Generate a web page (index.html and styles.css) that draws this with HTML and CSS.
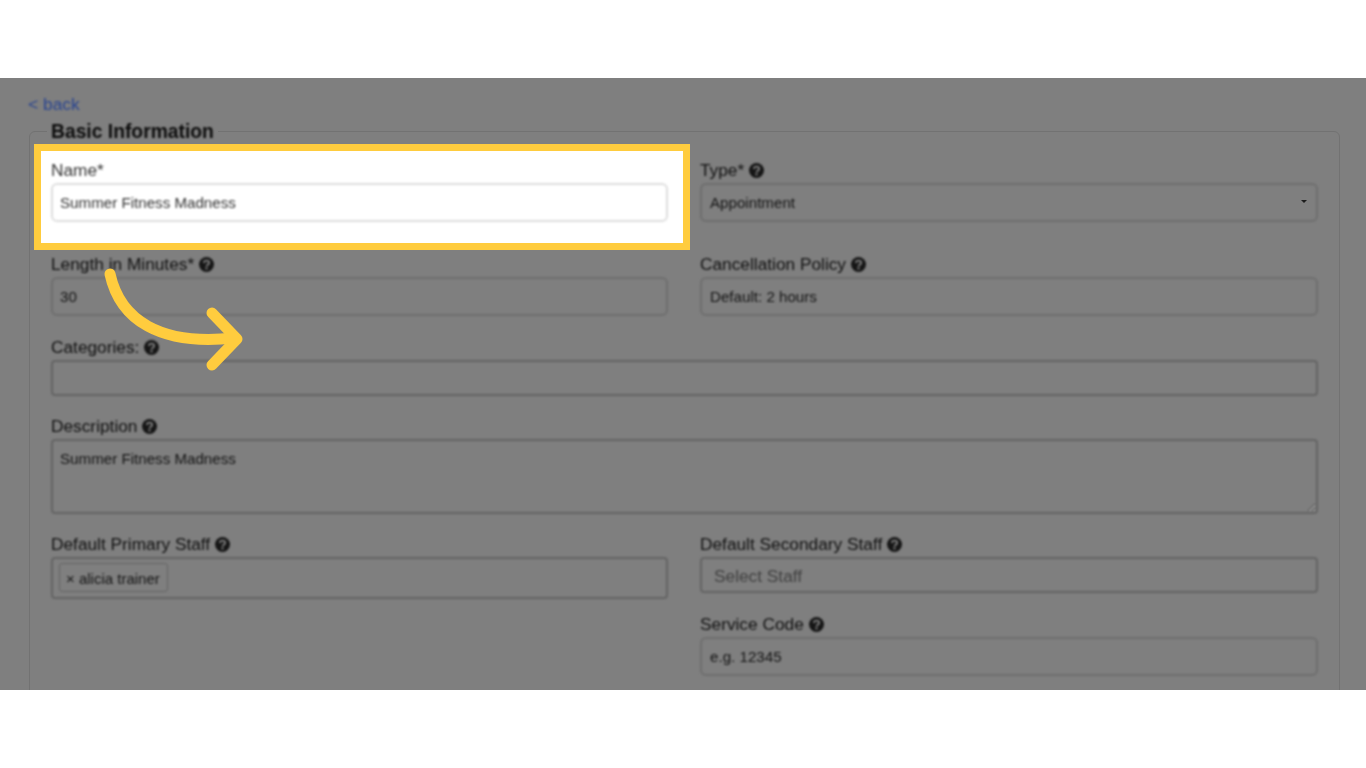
FILE: index.html
```html
<!DOCTYPE html>
<html lang="en">
<head>
    <meta charset="UTF-8">
    <meta name="viewport" content="width=device-width, initial-scale=1.0">
    <title>Edit Service</title>
    <link rel="stylesheet" href="styles.css">
</head>
<body>
    <svg class="icon-defs" width="0" height="0">
        <symbol id="help" viewBox="0 0 16 16">
            <circle cx="8" cy="8" r="8" fill="#161616"/>
            <path d="M5.2 6.2C5.4 4.6 6.6 3.8 8 3.8c1.6 0 2.8 1 2.8 2.3 0 2-2.8 2.1-2.8 3.9" fill="none" stroke="#7f7f7f" stroke-width="2"/>
            <rect x="6.9" y="11" width="2.2" height="2.2" fill="#7f7f7f"/>
        </symbol>
    </svg>
    <div class="stage">
        <a class="back-link" href="#">&lt; back</a>
        <fieldset class="panel">
            <legend>Basic Information</legend>
            <div class="form-row">
                <div class="field field-highlight">
                    <label class="field-label">Name*</label>
                    <input class="control" type="text" value="Summer Fitness Madness">
                </div>
                <div class="field field-right">
                    <label class="field-label">Type* <svg class="help"><use href="#help"/></svg></label>
                    <div class="select-wrap">
                        <select class="control">
                            <option>Appointment</option>
                        </select>
                        <span class="caret"></span>
                    </div>
                </div>
            </div>
            <div class="form-row row-tight">
                <div class="field">
                    <label class="field-label">Length in Minutes* <svg class="help"><use href="#help"/></svg></label>
                    <input class="control" type="text" value="30">
                </div>
                <div class="field field-right">
                    <label class="field-label">Cancellation Policy <svg class="help"><use href="#help"/></svg></label>
                    <input class="control" type="text" value="Default: 2 hours">
                </div>
            </div>
            <div class="field field-wide">
                <label class="field-label">Categories: <svg class="help"><use href="#help"/></svg></label>
                <input class="control control-square categories-input" type="text">
            </div>
            <div class="field field-wide">
                <label class="field-label">Description <svg class="help"><use href="#help"/></svg></label>
                <textarea class="control control-square description-input">Summer Fitness Madness</textarea>
            </div>
            <div class="form-row">
                <div class="field">
                    <label class="field-label">Default Primary Staff <svg class="help"><use href="#help"/></svg></label>
                    <div class="tag-box">
                        <span class="tag">× alicia trainer</span>
                    </div>
                </div>
                <div class="field field-right">
                    <label class="field-label">Default Secondary Staff <svg class="help"><use href="#help"/></svg></label>
                    <div class="staff-select">Select Staff</div>
                    <label class="field-label service-label">Service Code <svg class="help"><use href="#help"/></svg></label>
                    <input class="control" type="text" value="e.g. 12345">
                </div>
            </div>
        </fieldset>
        <svg class="arrow" width="150" height="110" viewBox="0 0 150 110">
            <path d="M10 8C20 54 60 80 134 72" fill="none" stroke="#ffcc3e" stroke-width="11" stroke-linecap="round"/>
            <path d="M112 47L137 73L112 99" fill="none" stroke="#ffcc3e" stroke-width="11" stroke-linecap="round" stroke-linejoin="round"/>
        </svg>
    </div>
</body>
</html>
```

FILE: styles.css
```css
* {
    box-sizing: border-box;
}
body {
    font-family: "Liberation Sans", Arial, sans-serif;
    background-color: #fff;
    margin: 0;
    padding: 78px 0;
    height: 768px;
    overflow: hidden;
}
.icon-defs {
    display: block;
    position: absolute;
}
.stage {
    position: relative;
    height: 612px;
    overflow: hidden;
    background-color: #7f7f7f;
    padding: 15px 26px 0 28px;
}
.back-link {
    display: block;
    height: 22px;
    font-size: 17.4px;
    line-height: 22px;
    color: #2a4590;
    text-decoration: none;
    filter: blur(0.8px);
}
.panel {
    margin: 4px 0 0 1px;
    padding: 17px 21px 40px;
    min-width: 0;
    border: 1px solid #727272;
    border-radius: 6px;
}
.panel legend {
    margin-left: -4px;
    padding: 2px 4px 0;
    font-size: 19.3px;
    line-height: 22px;
    font-weight: bold;
    color: #0c0c0c;
    filter: blur(0.8px);
}
.form-row {
    display: grid;
    grid-template-columns: 617px 618px;
    column-gap: 32px;
}
.field {
    margin-bottom: 32px;
}
.row-tight .field {
    margin-bottom: 21px;
}
.field-wide {
    margin-bottom: 20px;
}
.field-label {
    display: flex;
    align-items: center;
    gap: 5px;
    height: 20px;
    margin-bottom: 3px;
    font-size: 17.3px;
    line-height: 20px;
    color: #101010;
    filter: blur(0.8px);
}
.help {
    width: 15px;
    height: 15px;
}
.control {
    display: block;
    width: 100%;
    height: 39px;
    padding: 0 7px;
    font-family: inherit;
    font-size: 15.15px;
    color: #141414;
    background: transparent;
    border: 2px solid #6e6e6e;
    border-radius: 6px;
    outline: none;
    filter: blur(0.8px);
}
.field-right .control {
    padding-left: 8px;
}
select.control {
    appearance: none;
}
.select-wrap {
    position: relative;
}
.caret {
    position: absolute;
    right: 11px;
    top: 17px;
    border-left: 3px solid transparent;
    border-right: 3px solid transparent;
    border-top: 3px solid #1c1c1c;
}
.control-square {
    border-radius: 4px;
    border-color: #646464;
}
.categories-input {
    height: 36px;
}
.description-input {
    height: 75px;
    padding-top: 9px;
    line-height: 17px;
    resize: vertical;
}
.tag-box {
    height: 42px;
    padding: 4px 6px;
    border: 2px solid #646464;
    border-radius: 4px;
    filter: blur(0.8px);
}
.tag {
    display: inline-block;
    height: 29px;
    padding: 0 7px 0 6px;
    font-size: 15px;
    line-height: 29px;
    color: #141414;
    border: 1px solid #646464;
    border-radius: 3px;
}
.staff-select {
    height: 36px;
    padding-left: 12px;
    font-size: 17.3px;
    line-height: 34px;
    color: #404040;
    border: 2px solid #646464;
    border-radius: 4px;
    filter: blur(0.8px);
}
.service-label {
    margin-top: 21px;
}
.field-highlight {
    position: relative;
    z-index: 0;
}
.field-highlight::before {
    content: "";
    position: absolute;
    z-index: -1;
    left: -17px;
    right: -22px;
    top: -16px;
    bottom: -28px;
    background-color: #fff;
    border: 7px solid #ffcc3e;
}
.field-highlight .field-label {
    color: #333;
}
.field-highlight .control {
    color: #333;
    border-color: #dedede;
}
.arrow {
    position: absolute;
    left: 100px;
    top: 188px;
}
```
